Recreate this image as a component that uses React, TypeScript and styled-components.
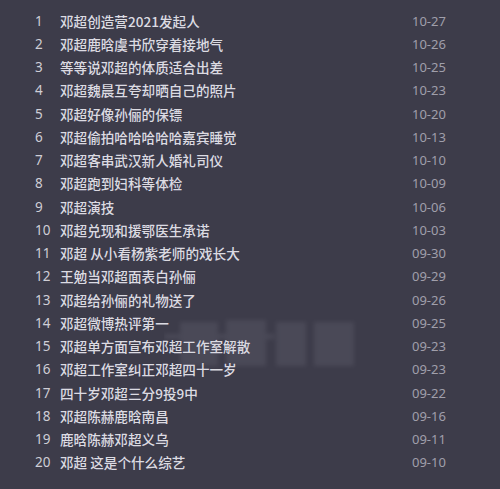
import React from 'react';
import styled, { createGlobalStyle } from 'styled-components';

const GlobalStyle = createGlobalStyle`
  html, body {
    margin: 0;
    padding: 0;
    background: #3d3c4a;
  }
  body {
    font-family: "Noto Sans CJK SC", "Noto Sans", sans-serif;
  }
`;

const Page = styled.div`
  position: relative;
  width: 500px;
  height: 489px;
  background: #3d3c4a;
  padding-top: 9px;
  box-sizing: border-box;
  overflow: hidden;
`;

const List = styled.ul`
  list-style: none;
  margin: 0;
  padding: 0;
`;

const Row = styled.li`
  display: grid;
  grid-template-columns: 35px 25px 1fr 88px;
  align-items: center;
  height: 23.26px;
`;

const Rank = styled.span`
  grid-column: 2;
  font-family: "Noto Sans", sans-serif;
  font-size: 13.5px;
  color: #cfced6;
`;

const Title = styled.span`
  grid-column: 3;
  font-size: 13.6px;
  font-weight: 500;
  color: #dcdbe2;
  white-space: nowrap;
`;

const Date = styled.span`
  grid-column: 4;
  font-family: "Noto Sans", sans-serif;
  font-size: 13px;
  color: #a09fab;
`;

// blurred watermark blocks over the list
const Watermark = styled.svg`
  position: absolute;
  left: 164px;
  top: 314px;
  pointer-events: none;
`;

const items: [string, string][] = [
  ['邓超创造营2021发起人', '10-27'],
  ['邓超鹿晗虞书欣穿着接地气', '10-26'],
  ['等等说邓超的体质适合出差', '10-25'],
  ['邓超魏晨互夸却晒自己的照片', '10-23'],
  ['邓超好像孙俪的保镖', '10-20'],
  ['邓超偷拍哈哈哈哈哈嘉宾睡觉', '10-13'],
  ['邓超客串武汉新人婚礼司仪', '10-10'],
  ['邓超跑到妇科等体检', '10-09'],
  ['邓超演技', '10-06'],
  ['邓超兑现和援鄂医生承诺', '10-03'],
  ['邓超 从小看杨紫老师的戏长大', '09-30'],
  ['王勉当邓超面表白孙俪', '09-29'],
  ['邓超给孙俪的礼物送了', '09-26'],
  ['邓超微博热评第一', '09-25'],
  ['邓超单方面宣布邓超工作室解散', '09-23'],
  ['邓超工作室纠正邓超四十一岁', '09-23'],
  ['四十岁邓超三分9投9中', '09-22'],
  ['邓超陈赫鹿晗南昌', '09-16'],
  ['鹿晗陈赫邓超义乌', '09-11'],
  ['邓超 这是个什么综艺', '09-10'],
];

export default function App() {
  return (
    <Page>
      <GlobalStyle />
      <List>
        {items.map(([title, date], i) => (
          <Row key={i}>
            <Rank>{i + 1}</Rank>
            <Title>{title}</Title>
            <Date>{date}</Date>
          </Row>
        ))}
      </List>
      <Watermark width="200" height="62" viewBox="0 0 200 62">
        <defs>
          <filter id="wmBlur">
            <feGaussianBlur stdDeviation="2" />
          </filter>
        </defs>
        <g fill="#c8c8d6" opacity="0.09" filter="url(#wmBlur)">
          <rect x="16" y="8" width="38" height="44" />
          <rect x="62" y="6" width="40" height="46" />
          <rect x="112" y="8" width="30" height="44" />
          <rect x="150" y="8" width="40" height="44" />
          <rect x="0" y="20" width="110" height="5" />
        </g>
      </Watermark>
    </Page>
  );
}
